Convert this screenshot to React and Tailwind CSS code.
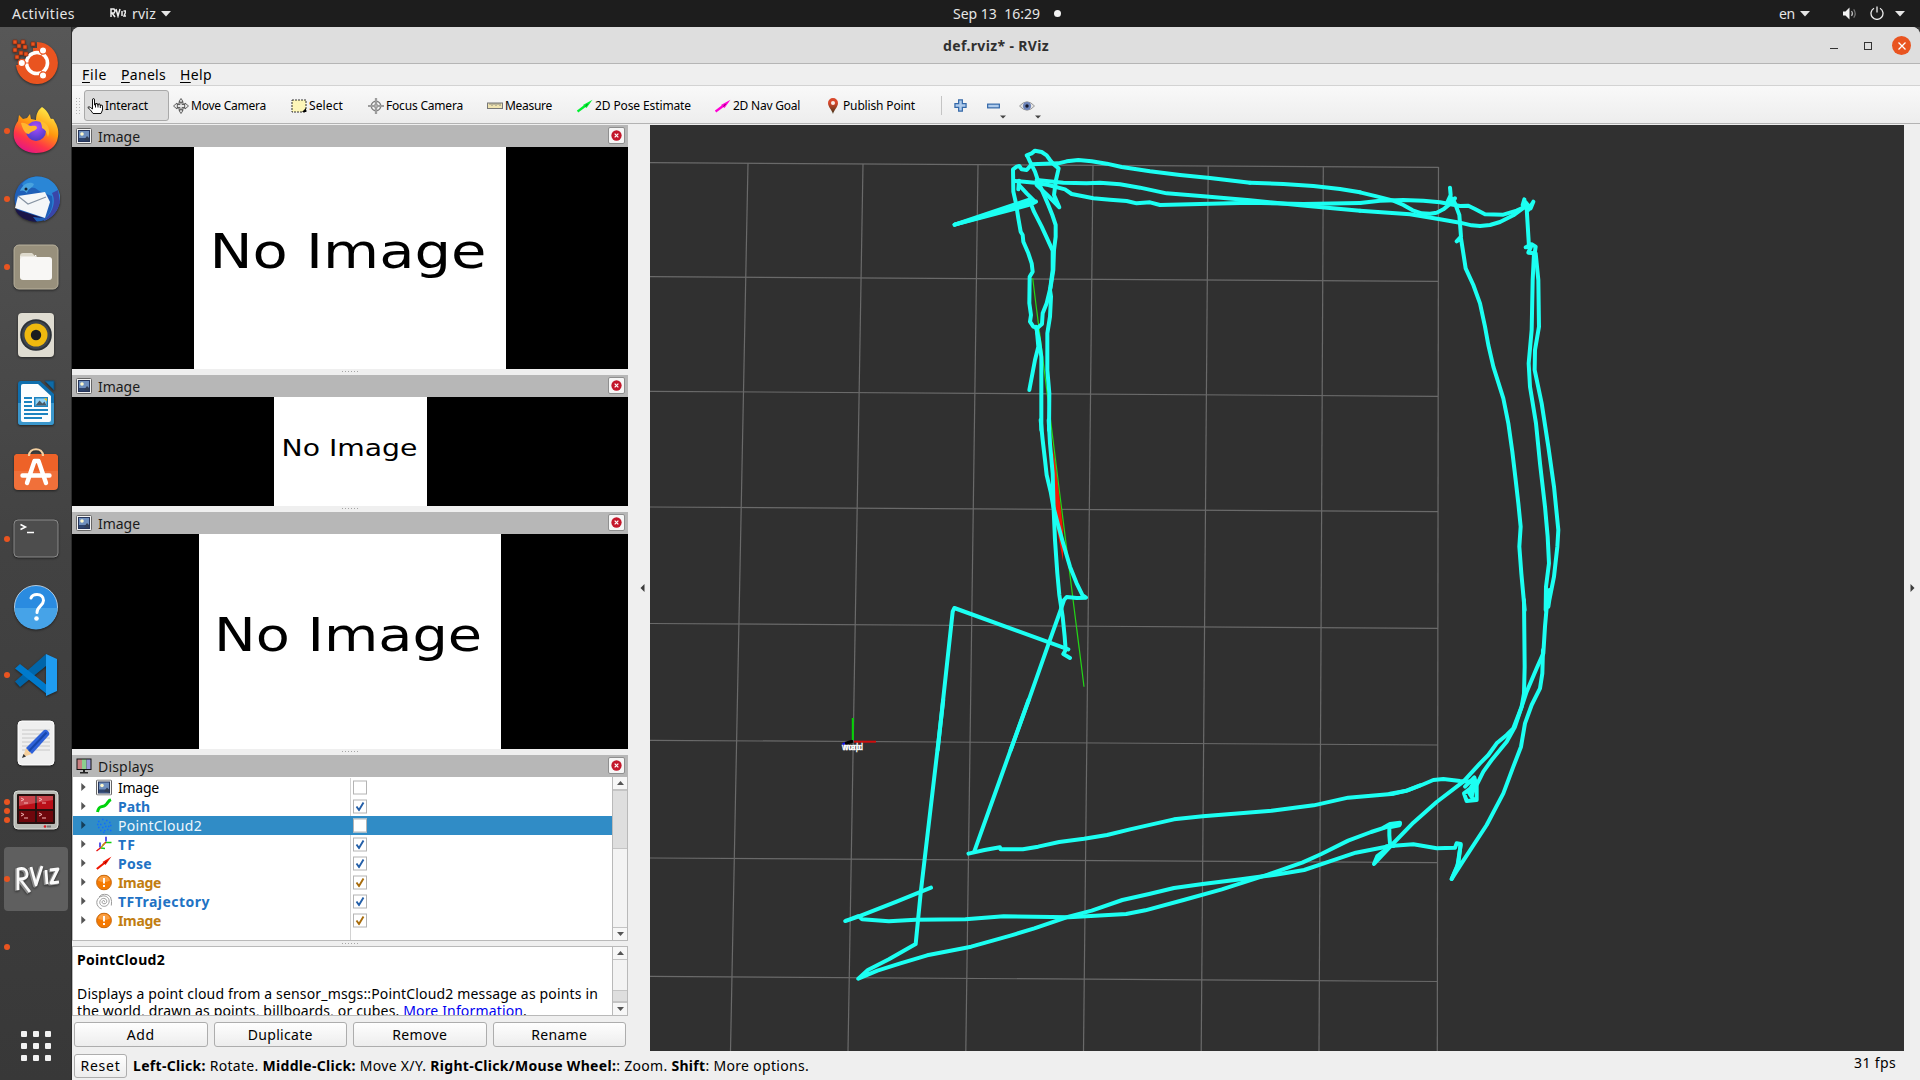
import React, { useLayoutEffect, useRef, useState } from "react";

const CYAN = "#1cfff2";

/* Text run tracked out (or in) so that it fills a given width. */
function Fit({ w, className = "", children }) {
  const ref = useRef(null);
  const [spacing, setSpacing] = useState(0);
  useLayoutEffect(() => {
    const el = ref.current;
    const natural = el.getBoundingClientRect().width;
    setSpacing((w - natural) / el.textContent.length);
  }, [w]);
  return (
    <span ref={ref} className={`inline-block shrink-0 whitespace-pre ${className}`} style={{ letterSpacing: `${spacing}px` }}>
      {children}
    </span>
  );
}

function Caret({ className = "" }) {
  return (
    <svg viewBox="0 0 10 6" className={`h-[6px] w-[10px] shrink-0 ${className}`}>
      <path d="M0 0h10L5 5.5z" fill="currentColor" />
    </svg>
  );
}

/* ---------- top bar ---------- */

function TopBar() {
  return (
    <header className="flex h-[27px] w-full shrink-0 items-center bg-[#1d1d1d] text-[14px] leading-[27px] text-[#e6e6e6]">
      <div className="flex w-[640px] items-center pl-3">
        <Fit w={63}>Activities</Fit>
        <svg viewBox="0 0 16 10" className="ml-[35px] h-[10px] w-4 shrink-0 -translate-y-px">
          <path d="M1 9V1h3l1 2-1 2H2l3 4M6 1l2 7 2-7M12 3v5M13.500 3H16l-2 5h2" fill="none" stroke="#eee" strokeWidth="1.500" />
        </svg>
        <Fit w={24} className="ml-[6px]">rviz</Fit>
        <Caret className="ml-[5px]" />
      </div>
      <div className="flex flex-1 items-center justify-center pl-[94px]">
        <Fit w={87}>Sep 13  16:29</Fit>
        <span className="ml-[14px] size-[7px] rounded-full bg-[#f2f2f2]" />
      </div>
      <div className="flex w-[640px] items-center justify-end pr-[15px]">
        <Fit w={16}>en</Fit>
        <Caret className="ml-[5px]" />
        <svg viewBox="0 0 16 14" className="ml-[32px] h-[14px] w-4 shrink-0 -translate-y-[0.500px]">
          <path d="M1 5h2.500L7.500 1v12L3.500 9H1z" fill="#f2f2f2" />
          <path d="M9.500 4.500q2 2.500 0 5" fill="none" stroke="#bbb" strokeWidth="1.200" />
          <path d="M11.700 2.800q3 4.200 0 8.400" fill="none" stroke="#777" strokeWidth="1.200" />
        </svg>
        <svg viewBox="0 0 14 14" className="ml-[12px] size-[14px] shrink-0 -translate-y-px">
          <path d="M4 2.200A6 6 0 1 0 10 2.200M7 .5v6" fill="none" stroke="#ececec" strokeWidth="1.300" />
        </svg>
        <Caret className="ml-[11px]" />
      </div>
    </header>
  );
}

/* ---------- dock ---------- */

const dockIcons = {
  ubuntu: (
    <g>
      <path d="M24 3A21 21 0 1 1 3 26h7v-6h6v-6h4V9h4z" fill="#e95420" transform="translate(1 0)" />
      <circle cx="25" cy="24" r="10.500" fill="none" stroke="#fff" strokeWidth="3.600" />
      <path d="M25 24 34 8M25 24 34 40M25 24H10" stroke="#e95420" strokeWidth="1.500" opacity="0.600" />
      <circle cx="25" cy="24" r="8" fill="#e95420" />
      <g fill="#fff" stroke="#e95420" strokeWidth="1.200">
        <circle cx="9.800" cy="24" r="3.600" />
        <circle cx="31" cy="11.500" r="3.600" />
        <circle cx="31" cy="36.500" r="3.600" />
      </g>
      <g fill="#e95420" stroke="#8c2c10" strokeWidth="0.700">
        <path d="M1 1h4v4H1zM9 1h4v4H9zM5 5h4v4H5zM19 3h4v4h-4zM11 6h4v4h-4zM1 9h4v4H1zM7 12h4v4H7zM12 13h4v4h-4zM3 16h4v4H3z" />
      </g>
    </g>
  ),
  firefox: (
    <g>
      <defs>
        <linearGradient id="fx" x1="0.800" y1="0" x2="0.300" y2="1">
          <stop offset="0" stopColor="#fff44f" />
          <stop offset="0.450" stopColor="#ff980e" />
          <stop offset="0.750" stopColor="#ff3647" />
          <stop offset="1" stopColor="#e31587" />
        </linearGradient>
        <radialGradient id="fxg" cx="0.500" cy="0.300" r="0.700">
          <stop offset="0" stopColor="#a84dff" />
          <stop offset="1" stopColor="#4a3bc4" />
        </radialGradient>
      </defs>
      <path d="M30 0c7 5 7 9 9 12 2-1 3 0 4 3 4 6 4 13 2 19-3 8-11 12-21 12S4 40 2 31c-1-8 1-13 4-17l1-6 4 4 4-1 3-4 1 5 5 1c0-6 2-10 6-13z" fill="url(#fx)" />
      <circle cx="24" cy="24" r="10" fill="url(#fxg)" />
      <path d="M9 16c5-1 7 3 10 3 2 0 6-1 6 2-1 3-6 3-8 6-3 0-6-3-8-11z" fill="#ffb52e" />
      <path d="M28 14c8 1 11 9 8 16-1-5-3-8-6-9 0-3-1-5-2-7z" fill="#ffbd2f" />
    </g>
  ),
  thunderbird: (
    <g>
      <circle cx="25" cy="24" r="22.500" fill="#1f5fb8" />
      <path d="M10 9C20-4 44 0 48 20c1 12-6 22-16 26 6-8 10-14 8-25-8-3-12-4-17-8-5-2-10 2-13-4z" fill="#2a86d6" />
      <path d="M40 18c5 10-1 22-9 28 8-2 15-9 17-19l-2-12z" fill="#3a45a8" />
      <path d="M6 21l27-4 5 10-5 16L3 33z" fill="#f4f6f8" />
      <path d="M6 21l10 8 18-7" fill="none" stroke="#8794a3" strokeWidth="1.200" />
      <path d="M3 34l28 9-10-1 4 5C14 46 6 42 3 34z" fill="#1a1548" />
      <path d="M8 16c3-8 10-10 14-7-1 4-6 4-7 9-3-3-5-3-7-2z" fill="#49a3de" />
      <circle cx="14" cy="14" r="1.500" fill="#123" />
    </g>
  ),
  files: (
    <g>
      <rect x="2" y="2" width="44" height="44" rx="5" fill="#98907c" stroke="#b8b19d" />
      <path d="M8 13q0-3 3-3h9l3 3v8H8z" fill="#dedacd" />
      <rect x="8" y="14" width="32" height="23" rx="3" fill="#f8f7f5" />
      <path d="M8 14h16V12.500h-1" fill="none" stroke="#f8f7f5" />
    </g>
  ),
  rhythmbox: (
    <g>
      <rect x="6" y="2" width="36" height="44" rx="4" fill="#dfdcd1" />
      <circle cx="24" cy="24" r="15.800" fill="#2b3036" />
      <circle cx="24" cy="24" r="14" fill="#3f464e" />
      <circle cx="24" cy="24" r="11.500" fill="#efb90f" />
      <circle cx="24" cy="24" r="5.200" fill="#1d1d1f" />
    </g>
  ),
  writer: (
    <g>
      <path d="M6 5q0-3 3-3h19l14 13v28q0 3-3 3H9q-3 0-3-3z" fill="#0f6fae" />
      <path d="M6 24h36v19q0 3-3 3H9q-3 0-3-3z" fill="#3b97cc" />
      <path d="M33 2h9v9z" fill="#0d6ba8" stroke="#17507a" />
      <path d="M9 7q0-2 2-2h15l13 12v24q0 2-2 2H11q-2 0-2-2z" fill="#fbfdfe" />
      <path d="M12 19h8M12 23h8M12 27h8M12 31h24M12 35h24M12 39h18" stroke="#1c83c0" strokeWidth="1.800" />
      <rect x="22" y="18" width="14" height="10" fill="#1c83c0" />
      <rect x="23.500" y="19.500" width="11" height="7" fill="#8ed1f5" />
      <path d="M23.500 26.500l4-5 3 3 2-2 2 4z" fill="#495a66" />
      <path d="M32 19.500h3v3z" fill="#f5c211" />
    </g>
  ),
  software: (
    <g transform="translate(0 -1)">
      <rect x="2" y="8" width="44" height="36" rx="4" fill="#f0703a" />
      <path d="M2 25V12q0-4 4-4h36q4 0 4 4v13z" fill="#ee6228" />
      <path d="M17 10c0-9 14-9 14 0" fill="none" stroke="#f3cfa0" strokeWidth="2.200" />
      <path d="M15 37 22.500 15h4L34 37M10.500 29.500h27" fill="none" stroke="#fff" strokeWidth="4.400" strokeLinecap="round" strokeLinejoin="round" />
    </g>
  ),
  terminal: (
    <g>
      <rect x="2" y="5" width="44" height="37" rx="4" fill="#4d4d4d" stroke="#8a8a8a" />
      <path d="M8.500 9.500l5 2.500-5 2.500M15 17.500h7" fill="none" stroke="#fff" strokeWidth="1.500" />
    </g>
  ),
  help: (
    <g>
      <circle cx="24" cy="24" r="21.500" fill="#2a8be0" stroke="#d5e6f4" strokeWidth="0.800" />
      <path d="M2.500 25h43a21.500 21.500 0 0 1-43 0z" fill="#46a3e8" />
      <path d="M19 15c1-3 4-3.500 6-3.500 4 0 6.500 2.500 6.500 6 0 5-6.500 6-6.500 12" fill="none" stroke="#fff" strokeWidth="3" strokeLinecap="round" />
      <circle cx="24.500" cy="35.500" r="2.300" fill="#fff" />
    </g>
  ),
  code: (
    <g>
      <path d="M34 3v12L8 36l-5-5.500z" fill="#0065a9" />
      <path d="M3 17.500 8 13l28 22v9z" fill="#007acc" />
      <path d="M34 3l11 5v32l-11 5z" fill="#1f9cf0" />
    </g>
  ),
  editor: (
    <g>
      <rect x="6" y="2" width="36" height="44" rx="4" fill="#efefef" stroke="#fff" />
      <path d="M10 11h28M10 15h28M10 19h28M10 23h28M10 27h28M10 31h28" stroke="#c8c8c8" />
      <path d="M11 38l3-9 6 6z" fill="#f5cf9c" />
      <path d="M14 29 32 11q2-1 4 1t1 4L20 35z" fill="#2f62d9" />
      <path d="M17 32 34.500 13.500" stroke="#1747ab" strokeWidth="2" />
      <path d="M10 39l1.500-4 2.500 2.500z" fill="#333" />
    </g>
  ),
  terminator: (
    <g transform="translate(0 -1)">
      <rect x="2" y="5" width="44" height="38" rx="4" fill="#b9bbb5" stroke="#dfe0dc" />
      <rect x="5" y="8" width="38" height="30" rx="1" fill="#26100f" />
      <path d="M7 10h16v13H7zM25 10h16v13H25z" fill="#b90f18" />
      <path d="M7 25h16v11H7zM25 25h16v11H25z" fill="#6e070c" />
      <path d="M7 10h34v4L7 20z" fill="#fff" opacity="0.220" />
      <path d="M9 12l3 1.500L9 15M12 17h4M27 12l3 1.500-3 1.500M30 17h4M9 27l3 1.500L9 30M12 32h4M27 27l3 1.500-3 1.500M30 32h4" fill="none" stroke="#f4b6b6" />
      <circle cx="33" cy="40.500" r="1.300" fill="#e01b24" />
      <path d="M35 40.500h4" stroke="#777" strokeWidth="2" />
    </g>
  ),
  rviz: (
    <g fill="none" strokeLinejoin="round">
      <path d="M6 35V14q8-2 9 4t-7 6l10 13M19 12l5 18 6-19M34 15l1 14M38 15l8-1-7 14 8-1" stroke="#8d8d8d" strokeWidth="3.600" transform="translate(-1.300 0.800)" />
      <path d="M6 35V14q8-2 9 4t-7 6l10 13M19 12l5 18 6-19M34 15l1 14M38 15l8-1-7 14 8-1" stroke="#fafafa" strokeWidth="2.800" />
    </g>
  ),
  blank: null,
};

const dock = [
  ["ubuntu", 0], ["firefox", 1], ["thunderbird", 1], ["files", 1], ["rhythmbox", 0], ["writer", 0],
  ["software", 0], ["terminal", 1], ["help", 0], ["code", 1], ["editor", 0], ["terminator", 3], ["rviz", 1], ["blank", 1],
];

function Dock() {
  return (
    <nav className="flex w-[72px] shrink-0 flex-col justify-between border-r border-[#2c2c2c] bg-linear-to-b from-[#575757] via-[#424242] to-[#383838] pb-[19px] pt-1">
      <div className="flex flex-col gap-1 pl-1">
        {dock.map(([name, dots]) => (
          <div key={name} className={`flex h-16 w-16 items-center rounded ${name === "rviz" ? "bg-[#5f5f5f]" : ""}`}>
            <div className="flex w-2 shrink-0 flex-col items-end gap-[3px] pr-[2px]">
              {Array.from({ length: dots }, (_, i) => (
                <span key={i} className="size-[6px] shrink-0 rounded-full bg-[#e95420]" />
              ))}
            </div>
            <svg viewBox="0 0 48 48" className="size-12 shrink-0 drop-shadow-[0_1px_1px_rgba(0,0,0,0.5)]">{dockIcons[name]}</svg>
          </div>
        ))}
      </div>
      <div className="grid grid-cols-3 gap-[6px] self-center">
        {Array.from({ length: 9 }, (_, i) => (
          <span key={i} className="size-[6px] rounded-[1px] bg-[#f2f2f2]" />
        ))}
      </div>
    </nav>
  );
}

/* ---------- toolbar ---------- */

const crosshair = "M8 0v16M0 8h16";
const toolIcons = {
  hand: <path d="M5.500 9V2q0-1.500 1-1.500T7.500 2v5h1V5.500h1.800V7h1V6h1.700v1.500h1V7l1.500.5V12l-1.500 3.500H6L3.500 12 .8 9.500q1-1.500 2.700 0l2 1.500zM8.500 7v2.500M11 7v2.500M13.300 7.500V10" fill="#fff" stroke="#111" />,
  move: <g fill="#e8e8e8" stroke="#555" strokeWidth="0.900"><path d="M8 .5l2 3H9v3h3V5l3.500 3L12 11V9.500H9v3h1l-2 3-2-3h1v-3H4V11L.5 8 4 5v1.500h3v-3H6z" /><circle cx="8" cy="8" r="3.800" fill="none" /></g>,
  select: <g><rect x="1" y="2" width="14" height="12" fill="#fdf6b8" stroke="#333" strokeDasharray="2 1" /><path d="M15 10v4h-4z" fill="#000" /></g>,
  focus: <g fill="none" stroke="#7d7d7d"><circle cx="8" cy="8" r="4.700" strokeWidth="1.500" /><circle cx="8" cy="8" r="1.800" /><path d={crosshair} strokeWidth="2.200" /><path d={crosshair} stroke="#d8d8d8" strokeWidth="0.700" /></g>,
  measure: <g><rect x="0.500" y="5" width="15" height="5.500" fill="#efe3b0" stroke="#777" /><path d="M3 5v2M5 5v3M7 5v2M9 5v3M11 5v2M13 5v3" stroke="#777" strokeWidth="0.800" /></g>,
  pose: <g stroke="#00f030"><path d="M.5 13.500 8 8" strokeWidth="2.400" /><path d="M6 7 15.500 1.800 9.500 10z" fill="#00f030" stroke="none" /><path d="M8.500 8.500l2-2.500" stroke="#0a7a20" /></g>,
  nav: <g stroke="#ff00d4"><path d="M.5 13.500 8 8" strokeWidth="2.400" /><path d="M6 7 15.500 1.800 9.500 10z" fill="#ff00d4" stroke="none" /><path d="M8.500 8.500l2-2.500" stroke="#80006a" /></g>,
  pin: <g><defs><linearGradient id="pin" x1="0" y1="0" x2="0" y2="1"><stop offset="0.300" stopColor="#d8482c" /><stop offset="1" stopColor="#3d3418" /></linearGradient></defs><path d="M8 16C7 12 3 9 3 5a5 5 0 0 1 10 0c0 4-4 7-5 11z" fill="url(#pin)" /><circle cx="8" cy="5" r="2" fill="#f7ece8" /></g>,
};

const tools = [
  ["hand", "Interact", 43, "w-[85px] rounded-[3px] border border-[#a9a9a9] bg-[#dcdcdc] pl-[2px]"],
  ["move", "Move Camera", 75, "w-[118px] pl-1"],
  ["select", "Select", 34, "w-[77px] pl-1"],
  ["focus", "Focus Camera", 77, "w-[119px] pl-1"],
  ["measure", "Measure", 47, "w-[90px] pl-1"],
  ["pose", "2D Pose Estimate", 96, "w-[138px] pl-1"],
  ["nav", "2D Nav Goal", 67, "w-[110px] pl-1"],
  ["pin", "Publish Point", 72, "w-[120px] pl-1"],
];

function DropMark() {
  return (
    <svg viewBox="0 0 6 4" className="mt-[22px] h-[4px] w-[6px] shrink-0">
      <path d="M0 .5h6L3 3.500z" fill="#444" />
    </svg>
  );
}

function Toolbar() {
  return (
    <div className="flex h-[38px] shrink-0 items-center border-b border-[#b3b3b3] bg-linear-to-b from-[#f9f9f9] to-[#ededed] pl-1 pt-[2px] text-[12px] leading-[15px] text-black">
      <div className="mr-1 grid grid-cols-2 gap-x-[2px] gap-y-[2px]">
        {Array.from({ length: 12 }, (_, i) => (
          <span key={i} className="size-px bg-[#b5b5b5]" />
        ))}
      </div>
      {tools.map(([icon, label, w, cls]) => (
        <div key={label} className={`flex h-[31px] shrink-0 items-center gap-[2px] ${cls}`}>
          <svg viewBox="0 0 16 16" className="size-4 shrink-0">{toolIcons[icon]}</svg>
          <Fit w={w}>{label}</Fit>
        </div>
      ))}
      <span className="h-[19px] w-px bg-[#c4c4c4]" />
      <svg viewBox="0 0 14 14" className="ml-[12px] size-[13px] shrink-0">
        <path d="M5 1h4v4h4v4H9v4H5V9H1V5h4z" fill="#aecbec" stroke="#3468a8" strokeWidth="1.300" />
      </svg>
      <svg viewBox="0 0 14 6" className="ml-[20px] h-[6px] w-[13px] shrink-0">
        <rect x="0.700" y="1" width="12.600" height="4" fill="#aecbec" stroke="#3468a8" strokeWidth="1.300" />
      </svg>
      <DropMark />
      <svg viewBox="0 0 16 12" className="ml-[13px] h-[12px] w-4 shrink-0">
        <path d="M.5 6Q8-2.500 15.500 6 8 14.500.5 6z" fill="#e4e4e4" stroke="#9a9a9a" />
        <circle cx="8" cy="6" r="4" fill="#6c83b8" />
        <circle cx="8" cy="6" r="1.700" fill="#15182a" />
      </svg>
      <DropMark />
    </div>
  );
}

/* ---------- left panels ---------- */

function PictureIcon() {
  return (
    <svg viewBox="0 0 16 16" className="size-4 shrink-0">
      <rect x="0.500" y="0.500" width="15" height="15" rx="1" fill="#f4f4f4" stroke="#666" />
      <rect x="2.500" y="2.500" width="11" height="11" fill="#6f8fbd" stroke="#26355a" />
      <path d="M3 10h10v3H3z" fill="#2f4570" />
      <circle cx="6" cy="6" r="1.800" fill="#fdf8cd" />
      <path d="M8 12l3-4 2 2v3z" fill="#333f55" />
    </svg>
  );
}

function MonitorIcon() {
  return (
    <svg viewBox="0 0 16 16" className="size-4 shrink-0">
      <rect x="0.500" y="0.500" width="15" height="11.500" fill="#111" />
      <path d="M1.500 1.500H6V11H1.500z" fill="#c87f80" />
      <path d="M6 1.500h4.500V11H6z" fill="#8ccf8f" />
      <path d="M10.500 1.500h4V11h-4z" fill="#9898d8" />
      <path d="M7 12h2v2h3v1.500H4V14h3z" fill="#222" />
    </svg>
  );
}

function PanelHeader({ icon, title, w }) {
  return (
    <div className="flex h-[22px] shrink-0 items-center bg-[#b7b7b7] pl-1 pr-[3px] text-[14px] leading-[22px] text-[#1b1b1b]">
      {icon}
      <Fit w={w} className="ml-[6px] translate-y-px">{title}</Fit>
      <span className="ml-auto flex size-[17px] -translate-y-[1px] items-center justify-center rounded-[2px] border border-[#8f8f8f] bg-[#f6f6f6]">
        <svg viewBox="0 0 12 12" className="size-[11px]">
          <circle cx="6" cy="6" r="5.600" fill="#c4162a" />
          <path d="M4 4l4 4M8 4l-4 4" stroke="#fff" strokeWidth="1.300" />
        </svg>
      </span>
    </div>
  );
}

function Grip({ className = "h-[6px] pb-px" }) {
  return (
    <div className={`flex w-full shrink-0 items-center justify-center gap-[2px] ${className}`}>
      {Array.from({ length: 6 }, (_, i) => (
        <span key={i} className="size-px bg-[#a5a5a5]" />
      ))}
    </div>
  );
}

function NoImage({ className, picture }) {
  return (
    <div className={`flex shrink-0 justify-center bg-black ${className}`}>
      <svg viewBox="0 0 312 222" preserveAspectRatio="none" className={`h-full bg-white ${picture}`}>
        <text x="15.500" y="120.500" fontFamily="DejaVu Sans" fontSize="47.300" textLength="277" lengthAdjust="spacingAndGlyphs" fill="#000">
          No Image
        </text>
      </svg>
    </div>
  );
}

const rowIcons = {
  path: <path d="M1.500 13.500C3 6 6 9 9 7s3-5 6-6" fill="none" stroke="#00d20c" strokeWidth="3" />,
  cloud: <path d="M2 4h1.500M6 2h1.500M10 3h1.500M13 5h1.500M4 7h1.500M8 6h1.500M12 9h1.500M2 10h1.500M6 10h1.500M9 9h1.500M4 13h1.500M8 13h1.500M11 12h1.500M14 8h1.500M7 15h1.500M14 13h1.500M1 7h1.500" stroke="#0f6dff" strokeWidth="1.500" />,
  tf: <g fill="none" strokeWidth="1.400"><path d="M10 0v5M4 6v5" stroke="#1414e0" /><path d="M10 5.500 6.500 9M5 11l-4.500 3.500" stroke="#e81010" /><path d="M10 6h5.500M5 11.500l4 .5" stroke="#10d010" /><path d="M9 6.500 5 11" stroke="#b8a010" /></g>,
  pose: <g><path d="M.8 13.500 9 7" stroke="#ee1500" strokeWidth="2.200" /><path d="M6.500 6.500 15.500 1l-6 8.500z" fill="#ee1500" /><path d="M8.500 8l2-2" stroke="#800" /></g>,
  warn: <g><circle cx="8" cy="8" r="7.400" fill="#f57900" stroke="#c66a12" /><path d="M2 6a6.300 6.300 0 0 1 12 0q-6 3-12 0z" fill="#fcaf5e" opacity="0.700" /><path d="M8 3.500v5.500M8 10.500v2" stroke="#fff" strokeWidth="1.900" /></g>,
  spiral: <path d="M8 8.500c1-.2.600-1.500-.3-1.500-2 0-2.400 3 .2 3.300 3.200.2 4-4 1-5.200C5.500 4 3 7.500 4 10.200c1.200 3 5.500 3.600 7.800 1C14.500 8 13 3.700 9.200 2.600 5 1.600.8 4.800.8 9c0 3 2 5.500 5 6.500M15.300 12q1-4-.8-8.500M3 3.500Q5 .8 8.500.7q4 0 6 3" fill="none" stroke="#8f8f8f" strokeWidth="0.900" />,
};

const rows = [
  { icon: "picture", name: "Image", w: 41, cls: "text-black" },
  { icon: "path", name: "Path", w: 32, cls: "font-bold text-[#2172c4]", check: "#245fa8" },
  { icon: "cloud", name: "PointCloud2", w: 84, cls: "text-[#eef6fc]", selected: true },
  { icon: "tf", name: "TF", w: 18, cls: "font-bold text-[#2172c4]", check: "#245fa8" },
  { icon: "pose", name: "Pose", w: 34, cls: "font-bold text-[#2172c4]", check: "#245fa8" },
  { icon: "warn", name: "Image", w: 43, cls: "font-bold text-[#c17d11]", check: "#a86c0c" },
  { icon: "spiral", name: "TFTrajectory", w: 92, cls: "font-bold text-[#2172c4]", check: "#245fa8" },
  { icon: "warn", name: "Image", w: 43, cls: "font-bold text-[#c17d11]", check: "#a86c0c" },
];

function TreeRow({ row }) {
  return (
    <div className={`flex h-[19px] items-center text-[14px] leading-[19px] ${row.selected ? "bg-[#308cc6]" : ""}`}>
      <div className={`flex h-full w-[278px] shrink-0 items-center border-r pl-2 ${row.selected ? "border-transparent" : "border-[#d2d2d2]"}`}>
        <svg viewBox="0 0 5 8" className="h-2 w-[5px] shrink-0 -translate-y-px">
          <path d="M.3 0 4.700 4 .3 8z" fill={row.selected ? "#153e58" : "#555"} />
        </svg>
        <span className="ml-[10px] flex size-4 shrink-0 -translate-y-[0.500px]">
          {row.icon === "picture" ? <PictureIcon /> : <svg viewBox="0 0 16 16" className="size-4">{rowIcons[row.icon]}</svg>}
        </span>
        <Fit w={row.w} className={`ml-[6px] ${row.cls}`}>{row.name}</Fit>
      </div>
      <span className="ml-[2px] flex size-[14px] -translate-y-[0.500px] items-center justify-center border border-[#b4b4b4] bg-white">
        {row.check && (
          <svg viewBox="0 0 10 10" className="size-[10px]">
            <path d="M1.500 5 4 8.500 8.500 1" fill="none" stroke={row.check} strokeWidth="1.900" />
          </svg>
        )}
      </span>
    </div>
  );
}

function ScrollBar({ before, thumb }) {
  const cell = "flex h-[13px] w-full shrink-0 items-center justify-center bg-[#f7f7f7]";
  return (
    <div className="flex w-[15px] shrink-0 flex-col border-l border-[#b9b9b9] bg-[#f3f3f3]">
      <span className={`${cell} border-b border-[#c4c4c4]`}>
        <svg viewBox="0 0 7 4" className="h-1 w-[7px]"><path d="M0 4h7L3.500 0z" fill="#555" /></svg>
      </span>
      <span className={before} />
      <span className={`w-full border-y border-[#c4c4c4] bg-[#dedede] ${thumb}`} />
      <span className="flex-1" />
      <span className={`${cell} border-t border-[#c4c4c4]`}>
        <svg viewBox="0 0 7 4" className="h-1 w-[7px]"><path d="M0 0h7L3.500 4z" fill="#555" /></svg>
      </span>
    </div>
  );
}

function Button({ w, className = "", children }) {
  return (
    <button className={`flex items-center justify-center rounded-[3px] border border-[#adadad] bg-linear-to-b from-[#fefefe] to-[#ededed] text-[14px] leading-none text-black ${className}`}>
      <Fit w={w}>{children}</Fit>
    </button>
  );
}

function LeftPanels() {
  return (
    <aside className="flex w-[556px] shrink-0 flex-col pt-px">
      <PanelHeader icon={<PictureIcon />} title="Image" w={42} />
      <NoImage className="h-[222px]" picture="w-[312px]" />
      <Grip />
      <PanelHeader icon={<PictureIcon />} title="Image" w={42} />
      <NoImage className="h-[109px]" picture="w-[153px]" />
      <Grip />
      <PanelHeader icon={<PictureIcon />} title="Image" w={42} />
      <NoImage className="h-[215px]" picture="w-[302px]" />
      <Grip />
      <PanelHeader icon={<MonitorIcon />} title="Displays" w={56} />
      <div className="flex h-[164px] shrink-0 border border-t-0 border-[#b9b9b9] bg-white">
        <div className="flex flex-1 flex-col pt-px">
          {rows.map((row, i) => (
            <TreeRow key={i} row={row} />
          ))}
          <div className="w-[278px] flex-1 border-r border-[#d2d2d2]" />
        </div>
        <ScrollBar before="h-0" thumb="mt-0 h-[59px]" />
      </div>
      <Grip className="h-[5px]" />
      <div className="flex h-[70px] shrink-0 overflow-hidden border border-[#b9b9b9] bg-white text-[14px] leading-[17px] text-black">
        <div className="flex flex-1 flex-col overflow-hidden pl-1 pt-1">
          <Fit w={88} className="self-start font-bold">PointCloud2</Fit>
          <Fit w={521} className="mt-[17px] self-start">Displays a point cloud from a sensor_msgs::PointCloud2 message as points in</Fit>
          <Fit w={450} className="self-start">the world, drawn as points, billboards, or cubes. <span className="text-[#0000f0] underline">More Information</span>.</Fit>
        </div>
        <ScrollBar before="h-[30px]" thumb="h-[12px]" />
      </div>
      <div className="mt-[6px] flex h-[25px] shrink-0 gap-[6px] px-[2px]">
        <Button w={28} className="flex-1">Add</Button>
        <Button w={65} className="flex-1">Duplicate</Button>
        <Button w={55} className="flex-1">Remove</Button>
        <Button w={56} className="flex-1">Rename</Button>
      </div>
    </aside>
  );
}

/* ---------- 3D view ---------- */

const gridLines = [
  [748, 163, 730.5, 1051], [863, 164, 848, 1051], [978, 165, 965.8, 1051], [1093, 165, 1083.5, 1051],
  [1208.2, 166, 1201.2, 1051], [1323.3, 166.5, 1319, 1051], [1438.5, 167, 1437.3, 1051],
  [650, 162.7, 1438.5, 167.3], [650, 276.7, 1438, 281.3], [650, 391.3, 1438, 396.3], [650, 507, 1438, 511.7],
  [650, 623.5, 1438, 628.3], [650, 740.3, 1438, 745], [650, 858, 1438, 862.7], [650, 976.3, 1438, 981.5],
];

/* Recorded trajectory, kept as map tiles with their own origin and scale. */
const tiles = [
  {
    transform: "translate(920 130) scale(0.33333)",
    lines: [
      "320,76 335,70 345,62 365,66 380,76 390,90 400,102 416,115 408,150 402,195 418,232 385,198 350,165",
      "322,78 330,95 345,125 355,155 372,195 385,225 397,255 407,285 407,320 402,360 400,420 392,470 380,520 368,550 366,582 352,594 340,590 330,575 333,555 328,520 329,440 338,425 335,400 325,370 310,335 308,315 302,305 295,265 288,220 280,185 279,118 290,110 298,108 305,118 320,120 335,103 415,100 440,94 475,90 515,94 560,101 605,111 690,124 780,135 870,144 990,158",
      "285,153 345,158 385,165 435,178 455,192 520,205 570,209 620,213 650,220 690,217 720,225 810,223 990,218 1150,222 1320,219",
      "350,150 430,158 500,160 540,158 600,163 660,173 740,190 850,199 990,211 1140,226 1320,242",
      "990,158 1090,162 1180,168 1260,177 1320,187",
      "104,284 330,208",
      "104,284 330,224 348,215",
      "104,284 340,216",
      "297,152 295,178",
      "297,165 320,190 345,215",
      "336,230 342,245 365,290 398,362 398,420 390,480 393,500 390,560 382,610 382,720 388,790 387,900",
      "350,594 355,650 345,690 328,780",
      "348,590 357,630 364,680 364,800 364,900",
    ],
  },
  {
    transform: "translate(920 420) scale(0.33333)",
    lines: [
      "362,0 368,60 375,120 380,165 392,215 400,260 413,310 428,365 450,440 470,490 487,525 498,533 470,534 440,531 432,540 422,570 388,665 330,830 272,990",
      "386,0 390,70 398,160 401,270 405,360 412,460 418,525 428,590 434,650 437,690 430,702 450,714",
      "445,688 103,564 98,575 53,990",
    ],
  },
  {
    transform: "translate(820 700) scale(0.3827 0.33333)",
    lines: [
      "322,0 310,120 263,580 250,732 180,778 125,810 100,836 150,812 210,790 280,766 395,740 500,706 560,685 650,650 710,632 790,600 860,582 925,564 1000,552 1100,538 1190,524 1265,510 1330,485 1400,458 1490,438",
      "545,0 470,240 403,455",
      "388,461 430,450 470,442 472,448 530,448 570,440 625,426 690,416 750,405 810,388 925,358 1000,349 1180,332 1290,316 1380,293 1500,281 1535,271 1568,256",
      "290,563 200,605 100,650 66,663 100,648 110,658 180,664 250,659 380,658 480,649 650,652 800,642 850,631 950,600 1050,568 1170,524 1260,488 1310,462 1380,422 1440,396 1500,374 1515,372",
    ],
  },
  {
    transform: "translate(1340 600) scale(0.33333)",
    lines: [
      "150,581 200,572 245,555 280,540 310,537 360,543 400,545",
      "375,560 403,532 410,560 410,600 380,603 372,580 398,560 395,590 404,545 385,575 400,598",
      "405,565 430,515 455,480 500,425 525,380 545,320 560,275 590,205 610,160 615,80 622,0 628,-30",
      "552,0 553,100 554,200 552,280 545,320 520,385 500,405 470,430 445,465 420,490 370,545 290,606 220,668 155,735 102,792 112,768 155,735",
      "130,683 150,672 180,668 178,676 148,682 148,705 150,730 160,738",
      "140,739 220,733 290,745 345,743 350,730 362,732 355,790 335,837 370,782 440,675 490,580 520,500 543,440 555,370 575,315 600,265 607,220 609,150",
      "335,837 352,800 362,735",
    ],
  },
  {
    transform: "translate(1360 130) scale(0.33333)",
    lines: [
      "0,187 50,199 100,212 130,225 158,241 185,250 210,251 230,248 250,238 270,222 285,205",
      "0,219 60,212 130,210 190,212 240,217 300,228 325,227 345,237 375,253 430,254 470,242 500,228",
      "0,242 150,253 240,268 300,278 335,286 360,288 390,285 420,276 460,256 495,230",
      "270,173 272,195 263,215 276,205 285,220 298,255 303,320 290,334 303,325 317,415 340,465 360,520 375,590 385,645 400,710 430,805 445,880 457,965 467,1050 475,1120 482,1190 478,1250 484,1330 494,1440",
      "493,208 488,225 505,240 520,215 512,235 495,215",
      "500,235 507,350 497,352 515,343 527,350 524,370 505,368 512,352",
      "522,370 518,450 515,600 506,700 510,770 528,880 540,1000 555,1130 563,1220 567,1300 558,1370 557,1440",
      "527,370 535,450 537,590 525,660 524,720 545,820 565,950 582,1070 595,1200 592,1250 582,1340 568,1410 565,1430",
    ],
  },
];

function Scene() {
  return (
    <svg viewBox="650 125 1254 926" className="mt-px h-[926px] w-[1254px] shrink-0 bg-[#303030]">
      <g stroke="#6a6a6a" strokeWidth="1.200">
        {gridLines.map(([x1, y1, x2, y2], i) => (
          <line key={i} x1={x1} y1={y1} x2={x2} y2={y2} />
        ))}
      </g>
      <path d="M1048 420l2 0 14.500 110v10z" fill="#7c120b" />
      <path d="M1053 450l3 15 7 65 0 31-7-37z" fill="#f01a08" />
      <path d="M1032.700 278.300 1084 686.700" stroke="#22d816" strokeWidth="1.200" />
      {tiles.map((tile) => (
        <g key={tile.transform} transform={tile.transform} fill="none" stroke={CYAN} strokeWidth="4" strokeLinejoin="round" strokeLinecap="round">
          {tile.lines.map((points) => (
            <polyline key={points} points={points} vectorEffect="non-scaling-stroke" />
          ))}
        </g>
      ))}
      <path d="M842.500 744.500l3-1.500" stroke="#1010f0" strokeWidth="2.500" />
      <path d="M845 743.500l8-2.500" stroke="#000" strokeWidth="3" />
      <path d="M852.800 718v22" stroke="#00d400" strokeWidth="2" />
      <path d="M854 741.700h22" stroke="#cf0c0c" strokeWidth="2" />
      <g fontFamily="Liberation Sans" fontSize="8.500" fill="#fff" stroke="#fff" strokeWidth="0.300">
        <text x="842" y="750" textLength="21">world</text>
        <text x="843.500" y="750" textLength="17">map</text>
      </g>
    </svg>
  );
}

function SideHandle({ className, d }) {
  return (
    <div className={`flex shrink-0 items-center justify-center ${className}`}>
      <svg viewBox="0 0 5 8" className="h-2 w-[5px]">
        <path d={d} fill="#3c3c3c" />
      </svg>
    </div>
  );
}

/* ---------- window ---------- */

function TitleBar() {
  return (
    <div className="flex h-[37px] shrink-0 items-center rounded-t-lg border-b border-[#b5b5b5] bg-[#dedede] pt-px text-[14px] leading-[35px] text-[#303030]">
      <div className="w-[400px]" />
      <div className="flex flex-1 justify-center">
        <Fit w={106} className="font-bold">def.rviz* - RViz</Fit>
      </div>
      <div className="flex w-[400px] items-center justify-end pr-[9px]">
        <span className="mt-[5px] h-px w-2 bg-[#333]" />
        <span className="ml-[26px] size-2 border border-[#333]" />
        <span className="ml-[20px] flex size-[19px] items-center justify-center rounded-full bg-[#e95420]">
          <svg viewBox="0 0 8 8" className="size-2">
            <path d="M.5.500l7 7M7.500.500l-7 7" stroke="#fff" strokeWidth="1.300" />
          </svg>
        </span>
      </div>
    </div>
  );
}

function MenuItem({ w, className = "", first, rest }) {
  return (
    <Fit w={w} className={className}>
      <span className="underline decoration-1 underline-offset-2">{first}</span>
      {rest}
    </Fit>
  );
}

export default function App() {
  return (
    <div className="flex h-[1080px] w-[1920px] flex-col overflow-hidden bg-[#3a3a3a] font-['Noto_Sans','Open_Sans',sans-serif]">
      <TopBar />
      <div className="flex min-h-0 flex-1">
        <Dock />
        <main className="flex w-[1848px] flex-col rounded-t-lg bg-[#efefef]">
          <TitleBar />
          <div className="flex h-[22px] shrink-0 items-center border-b border-[#d3d3d3] pl-[10px] text-[14px] leading-[21px] text-black">
            <MenuItem w={25} first="F" rest="ile" />
            <MenuItem w={45} className="ml-[14px]" first="P" rest="anels" />
            <MenuItem w={32} className="ml-[14px]" first="H" rest="elp" />
          </div>
          <Toolbar />
          <div className="flex h-[927px] shrink-0">
            <LeftPanels />
            <SideHandle className="w-[22px] pl-[6px]" d="M4.500 0v8L.5 4z" />
            <Scene />
            <SideHandle className="w-4" d="M.5 0v8L4.500 4z" />
          </div>
          <div className="flex h-[29px] shrink-0 items-start pl-[2px] pt-[2px] text-[14px] text-black">
            <Button w={40} className="mt-px h-[24px] w-[53px]">Reset</Button>
            <Fit w={676} className="ml-[6px] leading-[25px]">
              <b>Left-Click:</b> Rotate. <b>Middle-Click:</b> Move X/Y. <b>Right-Click/Mouse Wheel:</b>: Zoom. <b>Shift</b>: More options.
            </Fit>
            <Fit w={42} className="ml-auto mr-6 -translate-y-px leading-[22px]">31 fps</Fit>
          </div>
        </main>
      </div>
    </div>
  );
}
